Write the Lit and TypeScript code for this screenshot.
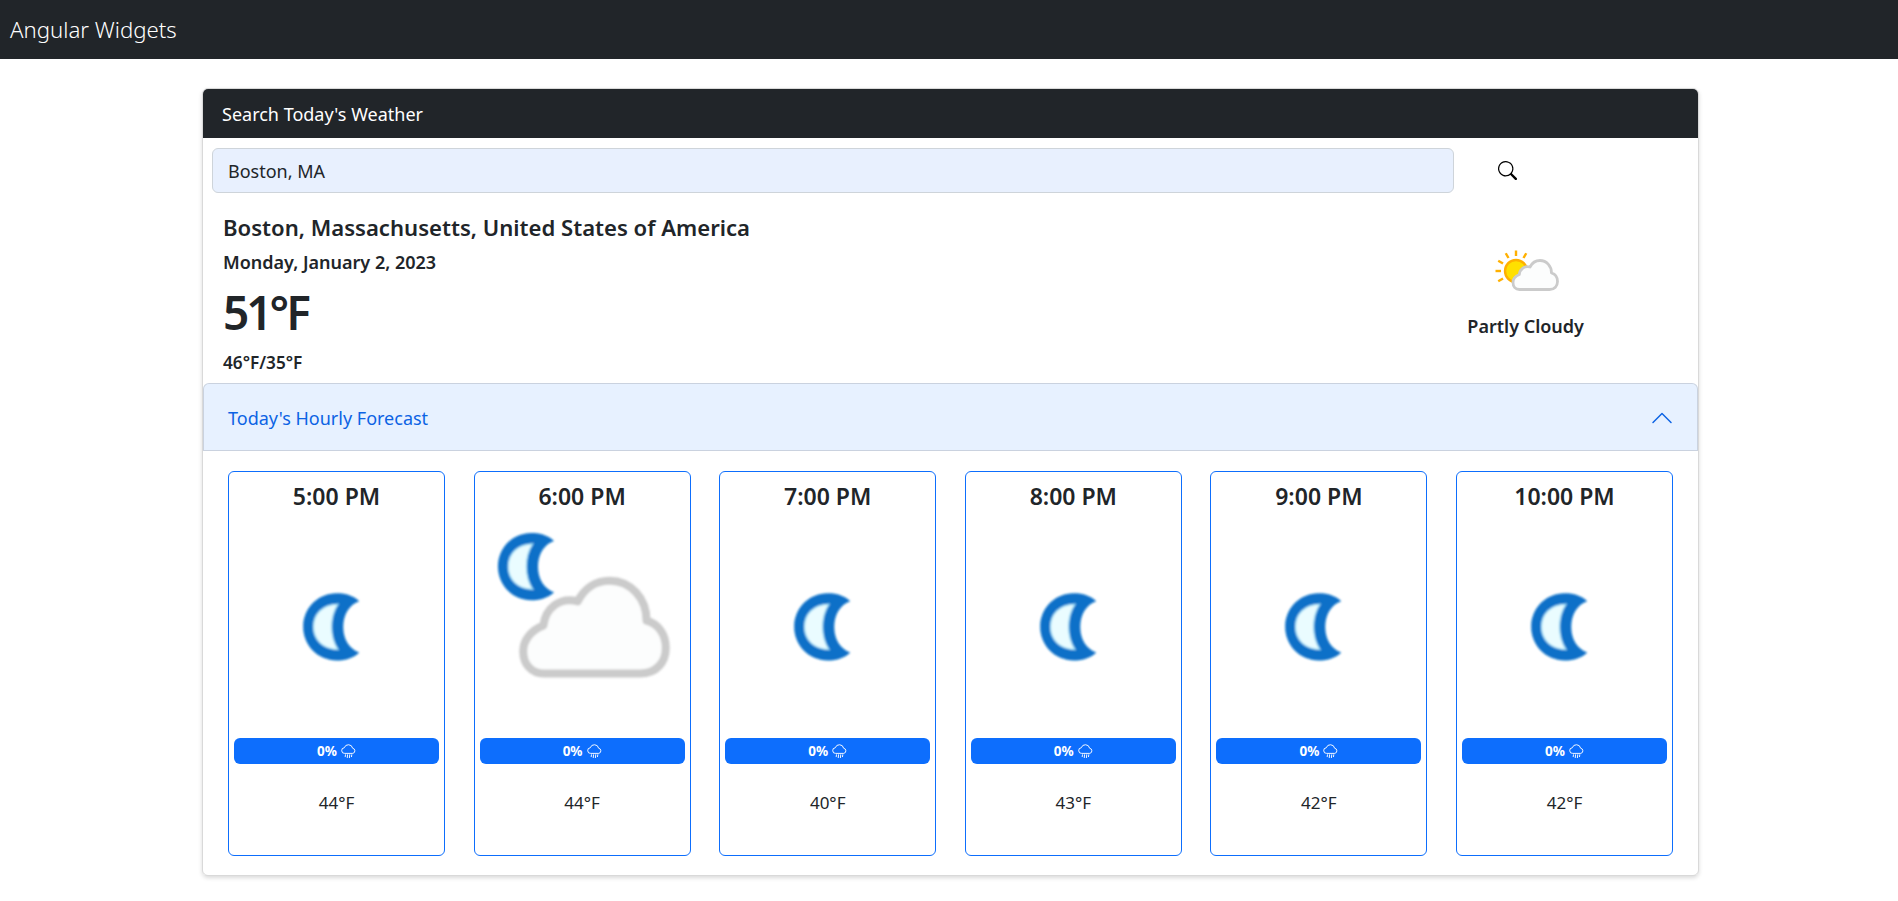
import { LitElement, css, html, svg } from "lit";
import { customElement } from "lit/decorators.js";

const hours = [
  { time: "5:00 PM", temp: "44°F", cloudy: false },
  { time: "6:00 PM", temp: "44°F", cloudy: true },
  { time: "7:00 PM", temp: "40°F", cloudy: false },
  { time: "8:00 PM", temp: "43°F", cloudy: false },
  { time: "9:00 PM", temp: "42°F", cloudy: false },
  { time: "10:00 PM", temp: "42°F", cloudy: false },
];

const cloudPath =
  "M20 46.5H50C55 46.5 58 43 58 38.5C58 34 55.5 31 52 30C52 23 47 17.5 40.5 17.5C36 17.5 32.5 20 30.5 24C25 22.5 20.5 26 19.8 31.5C16 33 13.5 36 13.5 39.5C13.5 43.5 16 46.5 20 46.5Z";
const moonOuter =
  "M17.5 2.5C15.5 .5 12.5 0 10.5 0C4.5 0 0 4.7 0 10.5C0 16.3 4.5 21 10.5 21C12.5 21 15.5 20.5 17.5 18.5C14.5 17.5 12.5 14.5 12.5 10.5C12.5 6.5 14.5 3.5 17.5 2.5Z";
const moonInner =
  "M10.9 3.4C6 3.4 3.2 6.6 3.2 10.5C3.2 14.4 6 17.6 10.9 17.6C9.5 15.5 8.9 13 8.9 10.5C8.9 8 9.5 5.5 10.9 3.4Z";

const cloud = (dx = 0, dy = 0, width = 2.5) => svg`
  <path d=${cloudPath} transform="translate(${dx} ${dy})" fill="#fcfdfd" stroke="#cbcbcb" stroke-width=${width} stroke-linejoin="round"></path>`;

const moon = (dx: number, dy: number) => svg`
  <g transform="translate(${dx} ${dy})">
    <path d=${moonOuter} fill="#0a70c8"></path>
    <path d=${moonInner} fill="#eafcff" stroke="#8ad6f4" stroke-width="0.4"></path>
  </g>`;

// rays of the little sun, angles in degrees from the x axis
const rays = [90, 60, 120, 150, 180, 210].map((deg) => {
  const a = (deg * Math.PI) / 180;
  const x1 = 22 + 15 * Math.cos(a);
  const y1 = 33 - 15 * Math.sin(a);
  const x2 = 22 + 20.5 * Math.cos(a);
  const y2 = 33 - 20.5 * Math.sin(a);
  return svg`<line x1=${x1} y1=${y1} x2=${x2} y2=${y2} stroke="#ffb000" stroke-width="2.4"></line>`;
});

const blur = svg`<defs><filter id="soft" x="-10%" y="-10%" width="120%" height="120%"><feGaussianBlur stdDeviation="0.3"></feGaussianBlur></filter></defs>`;

const dayIcon = html`<svg class="today-icon" viewBox="0 0 64 64">
  ${blur}
  <g filter="url(#soft)">
    ${rays}
    <circle cx="22" cy="33" r="11" fill="#ffe000" stroke="#ffb000" stroke-width="2.4"></circle>
    ${cloud(5.5, 5, 2.8)}
  </g>
</svg>`;

const nightIcon = (cloudy: boolean) => html`<svg class="hour-icon" viewBox="0 0 64 64">
  ${blur}
  <g filter="url(#soft)">${cloudy ? svg`${moon(5.6, 3.1)}${cloud(0, 0.5)}` : moon(21.6, 21.9)}</g>
</svg>`;

const rainIcon = html`<svg class="rain" viewBox="0 0 16 16" fill="none" stroke="#fff">
  <path stroke-width="1" d="M4 10a3 3 0 0 1-.5-6A4.6 4.6 0 0 1 12.4 4.5a2.8 2.8 0 0 1 .2 5.5Z"></path>
  <path stroke-width="1" stroke-linecap="round" d="M4.8 11.5l-.3 2M7 11.5l-.3 3M9.3 11.5l-.3 3M11.5 11.5l-.3 2"></path>
</svg>`;

@customElement("app-root")
export class AppRoot extends LitElement {
  static styles = css`
    :host {
      display: block;
      font-family: "Noto Sans", "Open Sans", sans-serif;
      color: #212529;
      font-size: 18px;
    }

    .navbar {
      background: #212529;
      height: 59px;
      display: flex;
      align-items: center;
      padding-left: 10px;
      color: #fff;
      font-size: 22.2px;
      font-weight: 300;
    }

    main {
      padding: 29px 199px 24px 202px;
    }

    .card {
      border: 1px solid rgba(0, 0, 0, 0.15);
      border-radius: 6px;
      box-shadow: 0 2px 4px rgba(0, 0, 0, 0.15);
    }

    .card-header {
      background: #212529;
      color: #fff;
      height: 49px;
      display: flex;
      align-items: center;
      padding-left: 19px;
      border-radius: 5px 5px 0 0;
    }

    .search {
      display: flex;
      align-items: center;
      padding: 10px 0 0 9px;
    }

    input {
      width: 1242px;
      height: 45px;
      box-sizing: border-box;
      border: 1px solid #ced4da;
      border-radius: 6px;
      background: #e8f0fe;
      padding: 0 15px;
      font: inherit;
      color: #212529;
    }

    .search-icon {
      width: 19px;
      height: 19px;
      margin-left: 44px;
    }

    .today {
      display: flex;
      justify-content: space-between;
      padding: 0 114px 0 20px;
      height: 190px;
    }

    .place {
      font-size: 22.1px;
      font-weight: 600;
      line-height: 30px;
      margin-top: 19px;
    }

    .date {
      font-size: 18px;
      font-weight: 600;
      line-height: 24px;
      margin-top: 8px;
    }

    .now {
      font-size: 46px;
      font-weight: 600;
      letter-spacing: -3px;
      line-height: 60px;
      margin-top: 8px;
    }

    .range {
      font-size: 17.2px;
      font-weight: 600;
      line-height: 24px;
      margin-top: 9px;
    }

    .condition {
      display: flex;
      flex-direction: column;
      align-items: center;
      padding-top: 45px;
      font-weight: 600;
      font-size: 18px;
    }

    .today-icon {
      width: 64px;
      height: 64px;
      display: block;
      margin-bottom: 12px;
      overflow: visible;
    }

    .accordion-head {
      height: 68px;
      background: #e7f1ff;
      color: #0c63e4;
      display: flex;
      align-items: center;
      justify-content: space-between;
      box-sizing: border-box;
      padding: 2px 24px 0 25px;
      border-radius: 6px 6px 0 0;
      box-shadow: inset 0 0 0 1px rgba(0, 0, 0, 0.125);
    }

    .chevron {
      width: 24px;
      height: 24px;
      transform: rotate(180deg);
    }

    .hours {
      display: flex;
      justify-content: space-between;
      padding: 20px 25px 19px;
    }

    .hour {
      width: 217px;
      height: 385px;
      box-sizing: border-box;
      border: 1px solid #0d6efd;
      border-radius: 6px;
      padding: 0 5px;
      display: flex;
      flex-direction: column;
      align-items: center;
    }

    .time {
      font-size: 23px;
      font-weight: 600;
      line-height: 29px;
      margin-top: 10px;
    }

    .hour-icon {
      width: 205px;
      height: 205px;
      display: block;
      margin-top: 12px;
    }

    .badge {
      width: 100%;
      height: 26px;
      margin-top: 10px;
      background: #0d6efd;
      color: #fff;
      border-radius: 6px;
      display: flex;
      align-items: center;
      justify-content: center;
      gap: 4px;
      font-size: 13.5px;
      font-weight: 700;
    }

    .rain {
      width: 15px;
      height: 15px;
    }

    .temp {
      margin-top: 27px;
      font-size: 17px;
      line-height: 24px;
    }
  `;

  render() {
    return html`
      <nav class="navbar">Angular Widgets</nav>
      <main>
        <section class="card">
          <div class="card-header">Search Today's Weather</div>
          <div class="search">
            <input .value=${"Boston, MA"} />
            <svg class="search-icon" viewBox="0 0 16 16" fill="#000">
              <path d="M11.742 10.344a6.5 6.5 0 1 0-1.397 1.398h-.001c.03.04.062.078.098.115l3.85 3.85a1 1 0 0 0 1.415-1.414l-3.85-3.85a1.007 1.007 0 0 0-.115-.1zM12 6.5a5.5 5.5 0 1 1-11 0 5.5 5.5 0 0 1 11 0z"></path>
            </svg>
          </div>
          <div class="today">
            <div>
              <div class="place">Boston, Massachusetts, United States of America</div>
              <div class="date">Monday, January 2, 2023</div>
              <div class="now">51°F</div>
              <div class="range">46°F/35°F</div>
            </div>
            <div class="condition">
              ${dayIcon}
              <span>Partly Cloudy</span>
            </div>
          </div>
          <div class="accordion-head">
            <span>Today's Hourly Forecast</span>
            <svg class="chevron" viewBox="0 0 16 16" fill="#0c63e4">
              <path fill-rule="evenodd" d="M1.646 4.646a.5.5 0 0 1 .708 0L8 10.293l5.646-5.647a.5.5 0 0 1 .708.708l-6 6a.5.5 0 0 1-.708 0l-6-6a.5.5 0 0 1 0-.708z"></path>
            </svg>
          </div>
          <div class="hours">
            ${hours.map(
              (h) => html`
                <article class="hour">
                  <div class="time">${h.time}</div>
                  ${nightIcon(h.cloudy)}
                  <div class="badge"><span>0%</span>${rainIcon}</div>
                  <div class="temp">${h.temp}</div>
                </article>
              `
            )}
          </div>
        </section>
      </main>
    `;
  }
}
